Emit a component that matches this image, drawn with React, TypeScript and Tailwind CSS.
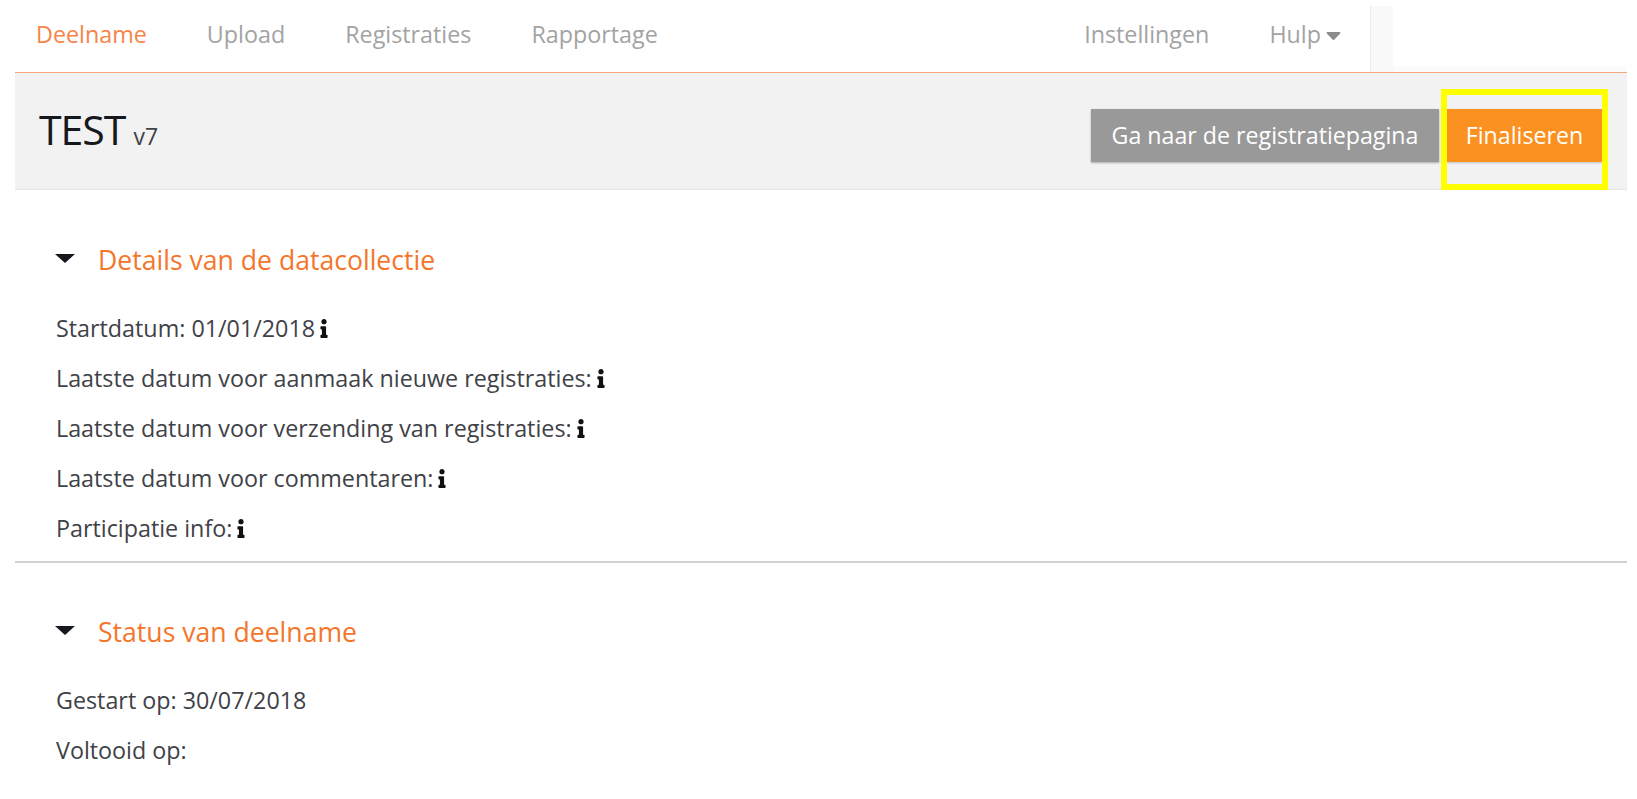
import React from 'react';
import { FaInfo, FaCaretDown } from 'react-icons/fa';

const font = "[font-family:'Open_Sans',sans-serif]";

const NavLink = ({ label, active }: { label: string; active?: boolean }) => (
  <a className={active ? 'text-[#f58549]' : 'text-[#a3a3a3]'}>{label}</a>
);

const Row = ({ label, info }: { label: string; info?: boolean }) => (
  <div className="flex h-[50px] items-center text-[23.3px] text-[#3f4247]">
    <span>{label}</span>
    {info && <FaInfo className="ml-[3px] h-[19px] w-[12px] text-[#111]" />}
  </div>
);

const SectionTitle = ({ title }: { title: string }) => (
  <div className="flex items-center">
    <div className="-ml-[1px] h-0 w-0 -translate-y-[2px] border-x-[10px] border-t-[9px] border-x-transparent border-t-[#15181d]" />
    <h2 className="ml-[23px] text-[26.6px] font-normal text-[#f4762b]">{title}</h2>
  </div>
);

export default function App() {
  return (
    <div className={`relative h-[799px] w-[1637px] overflow-hidden bg-white pl-[15px] pr-[10px] ${font}`}>
      {/* top nav */}
      <nav className="flex h-[73px] items-center border-b border-[#f6a878] text-[23.3px]">
        <div className="flex gap-[60px] pb-[3px] pl-[21px]">
          <NavLink label="Deelname" active />
          <NavLink label="Upload" />
          <NavLink label="Registraties" />
          <NavLink label="Rapportage" />
        </div>
        <div className="ml-auto flex h-full items-center">
          <div className="flex gap-[60px] pb-[3px] pr-[29px]">
            <NavLink label="Instellingen" />
            <span className="flex items-center text-[#a3a3a3]">
              Hulp
              <FaCaretDown className="ml-[5px] h-[24px] w-[15px] text-[#8c8c8c]" />
            </span>
          </div>
          <div className="mt-[6px] h-[66px] w-[23px] border-l border-[#ececec] bg-[#f9f9f9]" />
          <div className="h-full w-[234px] border-b-[6px] border-[#fbfbfb]" />
        </div>
      </nav>

      {/* title bar */}
      <header className="flex h-[117px] items-center border-b border-[#e4e4e4] bg-[#f2f2f2] pl-[24px] pr-[25px] pt-[8px]">
        <div className="flex -translate-y-[5px] items-baseline text-[#15181d]">
          <h1 className="text-[41px] font-normal tracking-[-1px]">TEST</h1>
          <span className="ml-[8px] text-[23px] text-[#3f4247]">v7</span>
        </div>
        <div className="ml-auto flex gap-[8px] text-[23.2px] text-white">
          <button className="h-[53px] w-[348px] bg-[#999999] shadow-[0_1px_2px_rgba(0,0,0,0.3)]">
            Ga naar de registratiepagina
          </button>
          <button className="h-[53px] w-[155px] bg-[#fb9121] shadow-[0_1px_2px_rgba(0,0,0,0.2)]">
            Finaliseren
          </button>
        </div>
      </header>

      {/* details */}
      <section className="border-b-2 border-[#d2d2d2] pb-[7px] pl-[41px] pt-[51px]">
        <SectionTitle title="Details van de datacollectie" />
        <div className="mt-[23px]">
          <Row label="Startdatum: 01/01/2018" info />
          <Row label="Laatste datum voor aanmaak nieuwe registraties:" info />
          <Row label="Laatste datum voor verzending van registraties:" info />
          <Row label="Laatste datum voor commentaren:" info />
          <Row label="Participatie info:" info />
        </div>
      </section>

      {/* status */}
      <section className="pl-[41px] pt-[50px]">
        <SectionTitle title="Status van deelname" />
        <div className="mt-[23px]">
          <Row label="Gestart op: 30/07/2018" />
          <Row label="Voltooid op:" />
        </div>
      </section>

      {/* highlight annotation */}
      <div className="absolute left-[1441px] top-[89px] h-[101px] w-[167px] border-[6px] border-[#ffff00]" />
    </div>
  );
}
